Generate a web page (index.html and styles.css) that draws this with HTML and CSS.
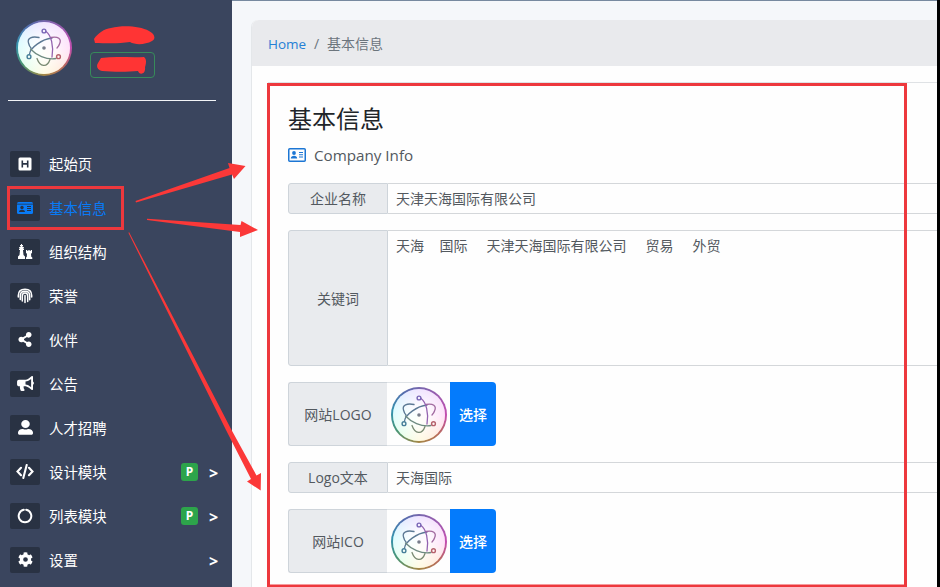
FILE: index.html
```html
<!DOCTYPE html>
<html lang="zh-CN">
<head>
<meta charset="utf-8">
<title>基本信息</title>
<link rel="stylesheet" href="styles.css">
</head>
<body>
<svg class="defs" width="0" height="0">
  <defs>
    <symbol id="atom" viewBox="0 0 56 56">
      <g fill="none" stroke-width="1.3" stroke-linecap="round">
        <path stroke="#5b7894" d="M23 17.500C16 16 11 18 12.500 23C13 25 14 27 15 28"/>
        <path stroke="#5b7894" d="M13.500 34C14 28 26 19 36 18"/>
        <path stroke="#a26aa0" d="M35 17.500C42 16 46 19 43.500 24C43 26 42 27 41 28"/>
        <path stroke="#9362b0" d="M30 11.500C35 15 38 26 36 37"/>
        <path stroke="#6e8a80" d="M14.500 29C20 35 30 40 40 38.500"/>
        <path stroke="#788971" d="M21 38.500C24 47 31 48 34 39.500"/>
      </g>
      <g fill="none" stroke-width="1.400">
        <circle cx="28" cy="11" r="1.900" stroke="#7967b6"/>
        <circle cx="13" cy="36.700" r="1.900" stroke="#467f99"/>
        <circle cx="42.500" cy="36.700" r="1.900" stroke="#b5606c"/>
      </g>
      <circle cx="28" cy="28" r="1.800" fill="#777d8b"/>
    </symbol>
  </defs>
</svg>
<div class="app">
  <aside class="sidebar">
    <div class="profile">
      <span class="logo"><svg><use href="#atom"/></svg></span>
      <div class="who">
        <svg class="scribble" width="64" height="20" viewBox="0 0 64 20"><path d="M4 18L3 14C7 8 13 4 20 3C32 0 49 1 58 6C64 9 65 14 61 16C54 20 44 20 39 17C27 19 13 18 4 18Z"/></svg>
        <div class="role"><svg class="scribble" width="51" height="18" viewBox="0 0 51 18"><path d="M5 2C20 0 35 2 48 1C51 3 50 8 49 11C50 19 43 19 42 15C32 16 17 16 6 15C1 14 0 10 2 7Z"/></svg></div>
      </div>
    </div>
    <nav class="menu">
      <a class="item"><i class="ico"><svg width="14" height="14" viewBox="0 0 14 14"><rect x="0.500" y="0.500" width="13" height="13" rx="1.500"/><path class="dark" d="M3.500 3.500h1.600v2.600h3.800V3.500h1.600v7H8.900V7.700H5.100v2.800H3.500z"/></svg></i><span>起始页</span></a>
      <a class="item active"><i class="ico"><svg width="16" height="14" viewBox="0 0 16 14"><rect y="1" width="16" height="12" rx="1.500"/><path class="dark" d="M0 2.800h16v.8H0zM10 5h4v1h-4zM10 7h4v1h-4zM10 9h4v1h-4zM2 11c0-3 6-3 6 0z"/><circle class="dark" cx="5" cy="6.500" r="1.700"/></svg></i><span>基本信息</span></a>
      <a class="item"><i class="ico"><svg width="16" height="15" viewBox="0 0 16 15"><path d="M4 0h1v1h1v1H5.500v1H7l-.7 2H7v1H6l.5 5L8 12.500V15H1v-2.500L2.500 11 3 6H2V5h.700L2 3h1.500V2H3V1h1zM9 6h1.300v1h1V6h1.400v1h1V6H15v3l-1 .8.300 3 1 .7V15H9v-1.500l.800-.7.200-3L9 9z"/></svg></i><span>组织结构</span></a>
      <a class="item"><i class="ico"><svg width="16" height="16" viewBox="0 0 16 16"><g class="line" stroke-width="1.500"><path d="M1.300 9V7.500C1.300 3.500 4 1.200 8 1.200s6.700 2.300 6.700 6.300V9M3.300 11.500V7.700C3.300 4.800 5 3.200 8 3.200s4.700 1.600 4.700 4.500v4M5.300 13V8c0-2 1-2.900 2.700-2.900s2.700.9 2.700 2.900v5.500M8 14.500V7.500"/></g></svg></i><span>荣誉</span></a>
      <a class="item"><i class="ico"><svg width="14" height="15" viewBox="0 0 448 512"><path d="M352 320c-22.600 0-43.400 7.800-59.800 20.900l-102.500-64.100a96.600 96.600 0 0 0 0-41.600l102.500-64.100C308.600 184.200 329.400 192 352 192c53 0 96-43 96-96S405 0 352 0s-96 43-96 96c0 7.200.8 14.100 2.300 20.800l-102.500 64.100C139.400 167.800 118.600 160 96 160c-53 0-96 43-96 96s43 96 96 96c22.600 0 43.400-7.800 59.800-20.900l102.500 64.100A96 96 0 0 0 256 416c0 53 43 96 96 96s96-43 96-96-43-96-96-96z"/></svg></i><span>伙伴</span></a>
      <a class="item"><i class="ico"><svg width="17" height="15" viewBox="0 0 576 512"><path d="M576 240c0-23.600-12.900-44-32-55.100V32c0-8.700-7-32-32-32a32 32 0 0 0-20 7l-85 68c-43 34-96 53-151 53H64c-35 0-64 29-64 64v96c0 35 29 64 64 64h33.700a243 243 0 0 0 24 140c5.400 10.700 17 16.800 29 16.800h74.300c26 0 41.600-30 25.900-50.700A127 127 0 0 1 226 352h30c55 0 108 19 151 53l85 68a32 32 0 0 0 20 7c24.900 0 32-22.800 32-32V295a64 64 0 0 0 32-55zm-96 141.400l-33-26.400A306 306 0 0 0 288 290V190a306 306 0 0 0 159-65l33-26.400z"/></svg></i><span>公告</span></a>
      <a class="item"><i class="ico"><svg width="15" height="15" viewBox="0 0 448 480" preserveAspectRatio="none"><path d="M224 256a128 128 0 1 0 0-256 128 128 0 0 0 0 256zm90 32h-17a174 174 0 0 1-146 0h-17C60 288 0 338 0 402v22c0 27 21 48 48 48h352c27 0 48-21 48-48v-22c0-64-60-114-134-114z"/></svg></i><span>人才招聘</span></a>
      <a class="item"><i class="ico"><svg width="18" height="15" viewBox="0 0 18 15"><path class="line" stroke-width="2.100" d="M5 3.800L1.500 7.500 5 11.200M13 3.800l3.500 3.700-3.500 3.700M10.700 1L7.300 14"/></svg></i><span>设计模块</span><b class="badge">P</b><em>&gt;</em></a>
      <a class="item"><i class="ico"><svg width="16" height="16" viewBox="0 0 16 16"><path class="line" stroke-width="2" d="M9.200 1.800a6.300 6.300 0 1 1-2.400 0"/></svg></i><span>列表模块</span><b class="badge">P</b><em>&gt;</em></a>
      <a class="item"><i class="ico"><svg width="15" height="15" viewBox="0 0 512 512"><path fill-rule="evenodd" d="M487 316l-43-25a195 195 0 0 0 0-70l43-25c5-3 7-9 6-14a250 250 0 0 0-55-95c-4-4-10-5-15-2l-43 24a190 190 0 0 0-60-35V25c0-6-4-11-10-12a250 250 0 0 0-110 0c-5 1-9 6-9 12v49a195 195 0 0 0-61 35L88 85c-5-3-11-2-15 2a249 249 0 0 0-55 95c-2 5 0 11 5 14l43 25a195 195 0 0 0 0 70l-43 25c-5 3-7 9-5 14a249 249 0 0 0 55 95c4 4 10 5 15 2l43-24a190 190 0 0 0 60 35v49c0 6 4 11 10 12a250 250 0 0 0 110 0c5-1 9-6 9-12v-49a195 195 0 0 0 61-35l42 24c5 3 11 2 15-2a249 249 0 0 0 55-95c2-5 0-11-6-14zM256 336a80 80 0 1 1 0-160 80 80 0 0 1 0 160z"/></svg></i><span>设置</span><em>&gt;</em></a>
    </nav>
  </aside>
  <main class="main">
    <section class="card">
      <div class="crumbs"><a>Home</a><span class="sep">/</span><span>基本信息</span></div>
      <div class="panel">
        <h1>基本信息</h1>
        <div class="sub"><svg width="18" height="14" viewBox="0 0 18 14"><rect x=".75" y=".75" width="16.500" height="12.500" rx="1" fill="none" stroke="#1c76d4" stroke-width="1.500"/><circle cx="6" cy="5" r="1.900"/><path d="M2.800 10.500c0-3.800 6.400-3.800 6.400 0zM11 4h4v1h-4zM11 6.300h4v1h-4zM11 8.600h4v1h-4z"/></svg><span>Company Info</span></div>
        <div class="field"><label>企业名称</label><div class="value">天津天海国际有限公司</div></div>
        <div class="field tall"><label>关键词</label><div class="value tags"><span>天海</span><span>国际</span><span>天津天海国际有限公司</span><span>贸易</span><span>外贸</span></div></div>
        <div class="field pick"><label>网站LOGO</label><div class="thumb"><span class="logo"><svg><use href="#atom"/></svg></span></div><button>选择</button></div>
        <div class="field"><label>Logo文本</label><div class="value">天海国际</div></div>
        <div class="field pick"><label>网站ICO</label><div class="thumb"><span class="logo"><svg><use href="#atom"/></svg></span></div><button>选择</button></div>
      </div>
    </section>
  </main>
  <div class="edge"></div>
</div>
<svg class="marks" width="940" height="587" viewBox="0 0 940 587">
  <rect class="frame" x="268.500" y="84.500" width="637" height="501.500"/>
  <rect class="frame" x="8.500" y="187.500" width="114" height="41"/>
  <path d="M135.500 201L229.500 168 228 163 245.500 166 234 179 232 174.500 136 202.500Z"/>
  <path d="M147 218.700L240.500 225 241.500 221 258 230 240 237 240 232 147 220Z"/>
  <path d="M129 232L231 429 256.500 475.500 261 473 260.700 490.500 247 481.500 251 479 226 430 128.500 233Z"/>
</svg>
</body>
</html>
```
FILE: styles.css
```css
* { box-sizing: border-box; }
body {
  margin: 0;
  height: 587px;
  overflow: hidden;
  font: 14px/20px "Open Sans", "Noto Sans CJK SC", sans-serif;
  color: #53595f;
}
.defs { position: absolute; }
.app { display: flex; height: 587px; }
.sidebar { width: 232px; flex: none; padding: 20px 8px 0; background: #3a455e; }
.profile {
  display: flex;
  width: 208px;
  height: 81px;
  padding-left: 8px;
  border-bottom: 1px solid #f2f4f7;
}
.logo {
  display: block;
  flex: none;
  width: 56px;
  height: 56px;
  border: 2px solid transparent;
  border-radius: 50%;
  background:
    radial-gradient(circle, rgba(255,255,255,.95) 25%, rgba(255,255,255,.55) 100%) padding-box,
    conic-gradient(#c9a5ff, #ff9ded 25%, #ffc2a0 38%, #fff0a0 50%, #b5ffc8 62%, #8cf2ff 78%, #a9c0ff 90%, #c9a5ff) padding-box,
    conic-gradient(#7668ad, #c34fb0 25%, #b86a5c 37%, #a48747 50%, #4b9575 65%, #3692ad 77%, #546ead 90%, #7668ad) border-box;
}
.logo svg { display: block; width: 56px; height: 56px; margin: -2px; }
.who { padding: 5px 0 0 18px; }
.scribble { display: block; fill: #ff3434; }
.who > .scribble { margin-left: 1px; }
.role {
  width: 65px;
  height: 26px;
  margin-top: 7px;
  padding: 3px 0 0 5px;
  border: 1px solid #378b5a;
  border-radius: 4px;
}
.menu { padding: 41px 0 0 2px; }
.item {
  display: flex;
  align-items: center;
  height: 44px;
  color: #fff;
  font-size: 14.4px;
}
.item span { padding-top: 2px; }
.ico {
  display: flex;
  align-items: center;
  justify-content: center;
  width: 30px;
  height: 26px;
  margin-right: 9px;
  padding-bottom: 1px;
  border-radius: 2px;
  background: #293243;
}
.ico svg { fill: #fff; }
.ico .dark { fill: #293243; }
.ico .line { fill: none; stroke: #fff; stroke-linecap: round; }
.active { color: #087bf7; }
.active .ico svg { fill: #087bf7; }
.badge {
  width: 17px;
  margin-left: auto;
  border-radius: 3px;
  background: #2da44b;
  font: bold 12px/18px "Noto Sans", sans-serif;
  text-align: center;
}
.item em {
  width: 10px;
  margin: 2px 5px 0 auto;
  font: bold 16px/20px "Noto Sans", sans-serif;
}
.badge + em { margin-left: 11px; }
.main {
  flex: 1;
  min-width: 0;
  padding: 19px 0 0 19px;
  border-top: 1px solid #77899f;
  background: #f5f7fa;
}
.card {
  height: 568px;
  border-left: 1px solid #e4e7ea;
  border-radius: 7px 0 0;
  background: #fefefe;
}
.crumbs {
  display: flex;
  height: 46px;
  padding: 14px 16px;
  border-radius: 7px 0 0;
  background: #e9eaed;
  color: #6c757d;
}
.crumbs a { width: 39px; color: #2580d5; font-size: 13.5px; }
.sep { width: 20px; padding-left: 7px; }
.panel {
  height: 510px;
  margin: 16px 0 0 16px;
  padding: 20px 0 0 20px;
  border-top: 1px solid #dfe2e5;
}
h1 { margin: 0; color: #212529; font-size: 24px; font-weight: 400; line-height: 32px; }
.sub {
  display: flex;
  align-items: center;
  gap: 8px;
  height: 24px;
  margin: 8px 0 16px;
  font-size: 15.2px;
}
.sub svg { fill: #1c76d4; }
.field { display: flex; height: 31px; margin-bottom: 16px; }
.field label {
  display: flex;
  align-items: center;
  justify-content: center;
  width: 100px;
  flex: none;
  border: 1px solid #ced4da;
  border-radius: 3px 0 0 3px;
  background: #e9ebee;
}
.value { flex: 1; padding: 5px 8px; border: solid #d4d7da; border-width: 1px 0; }
.tall { height: 136px; }
.tall label, .pick label { padding-top: 2px; }
.tags { display: flex; }
.tags span { margin-right: 19px; }
.tags span:first-child { margin-right: 15.500px; }
.pick { height: 64px; }
.pick label { width: 99px; border-right: 0; }
.thumb { width: 63px; padding: 4px 3px 4px 4px; border: solid #dee2e6; border-width: 1px 0; }
.field button {
  width: 46px;
  padding: 0;
  border: 0;
  border-radius: 0 4px 4px 0;
  background: #047bfc;
  color: #fff;
  font: 500 14px/20px "Noto Sans CJK SC", sans-serif;
}
.edge { width: 3px; flex: none; background: #000; }
.marks { position: absolute; inset: 0; fill: #fb3838; }
.frame { fill: none; stroke: #ed383d; stroke-width: 3; }
```
